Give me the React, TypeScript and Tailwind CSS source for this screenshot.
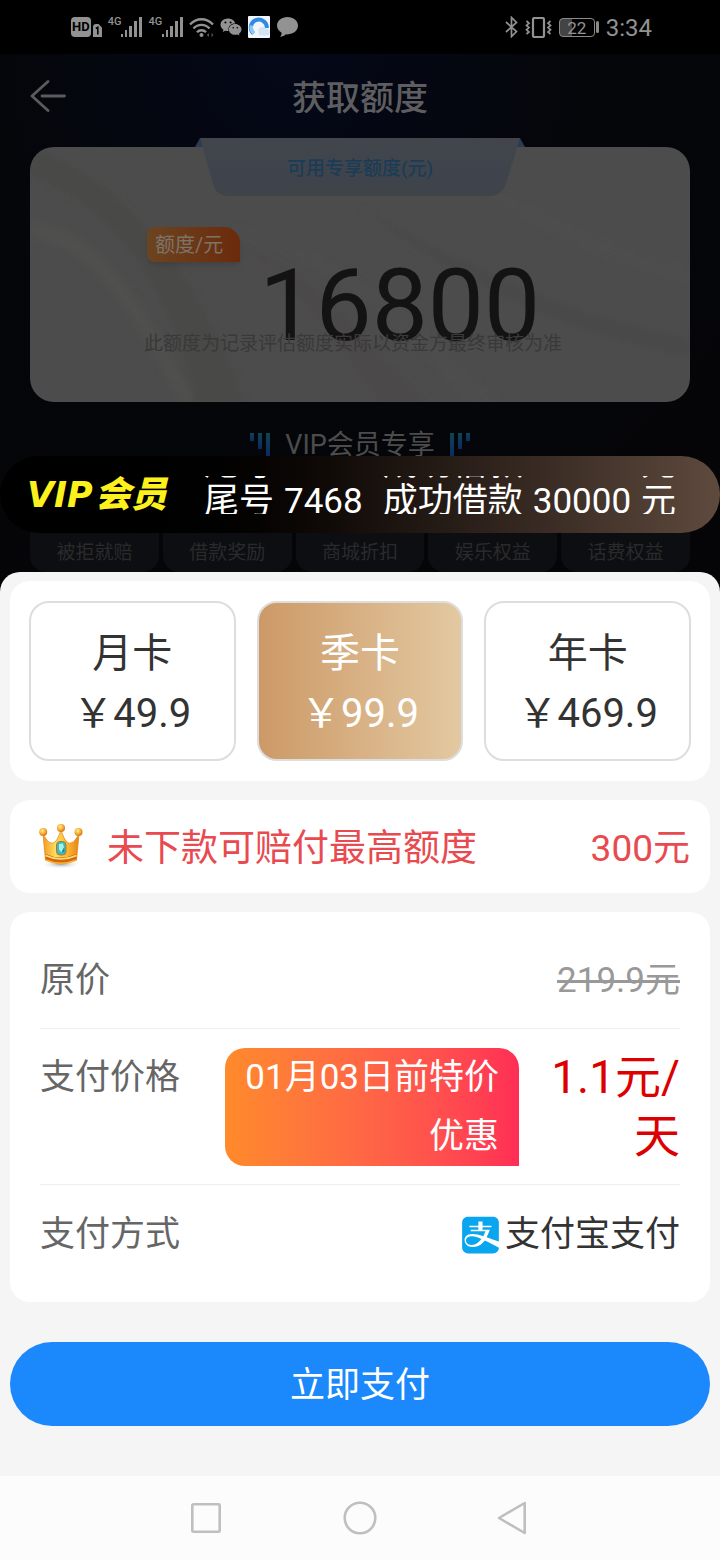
import React, { useState } from "react";
import { FaAlipay, FaWeixin } from "react-icons/fa";

const plans = [
  { id: "month", name: "月卡", price: "49.9" },
  { id: "quarter", name: "季卡", price: "99.9" },
  { id: "year", name: "年卡", price: "469.9" },
];

const benefits = ["被拒就赔", "借款奖励", "商城折扣", "娱乐权益", "话费权益"];

const messages = [
  { tail: "3159", amount: "11000" },
  { tail: "7468", amount: "30000" },
];

function Signal() {
  return (
    <div className="flex items-start">
      <span className="text-[11px] leading-3 font-medium">4G</span>
      <svg width="21" height="22" viewBox="0 0 21 22" fill="currentColor">
        <rect x="0" y="18" width="2" height="3" />
        <rect x="4" y="14" width="2" height="7" />
        <rect x="8" y="10" width="3" height="11" />
        <rect x="13" y="5" width="3" height="16" />
        <rect x="18" y="1" width="3" height="20" />
      </svg>
    </div>
  );
}

function StatusBar() {
  return (
    <div className="h-[54px] bg-black text-[#929292] flex items-center justify-between pl-[71px] pr-[68px]">
      <div className="flex items-center gap-[6px]">
        {/* HD + sim slot */}
        <div className="flex items-end gap-[2px]">
          <span className="h-5 px-px rounded-sm bg-[#929292] text-black text-[13px] leading-5 font-bold">HD</span>
          <svg width="9" height="13" viewBox="0 0 9 13">
            <path d="M0 3Q0 0 3 0H5.500L9 3.500V13H0z" fill="currentColor" />
            <path d="M2.800 4.500l2-1.200V10.500" stroke="#000" strokeWidth="1.600" fill="none" />
          </svg>
        </div>
        <Signal />
        <Signal />
        <svg width="25" height="21" viewBox="0 0 25 21" fill="none" stroke="currentColor" strokeWidth="2.400">
          <path d="M1 7.500C7.500.500 17.500.500 24 7.500" />
          <path d="M4.500 11.500c4.500-4.800 11.500-4.800 16 0" />
          <path d="M8 15.200c2.500-2.700 6.500-2.700 9 0" />
          <circle cx="12.500" cy="18" r="1.200" fill="currentColor" strokeWidth="1.600" />
          <path d="M20 16v4l-2.200-2zM22.500 16v4l2-2z" fill="#555" stroke="none" />
        </svg>
        <FaWeixin className="w-[22px] h-[22px]" />
        <svg width="22" height="22" viewBox="0 0 22 22">
          <rect width="22" height="22" rx="1" fill="#f2f6fb" />
          <path d="M5.500 17.500A8 8 0 1 1 18.800 12" fill="none" stroke="#2d8be6" strokeWidth="4" />
          <path d="M6 17.500a8 8 0 0 1-2.500-8" fill="none" stroke="#8cc7f6" strokeWidth="3.600" />
          <path d="M11 19.500h7.500a3.300 3.300 0 0 0 0-6.600 5 5 0 0 0-8.500 1z" fill="#d3e4f3" />
        </svg>
        <svg width="23" height="22" viewBox="0 0 23 22" fill="currentColor">
          <path d="M11.500 1C5.500 1 1 4.800 1 9.600c0 3 1.800 5.600 4.600 7.100 0 1.600-.6 3-1.600 4 2.400-.1 4.500-1 6-2.400l1.500.1c6 0 10.500-4 10.500-8.800S17.500 1 11.500 1z" />
        </svg>
      </div>

      <div className="flex items-center gap-[7px]">
        <svg width="13" height="22" viewBox="0 0 13 22" fill="none" stroke="currentColor" strokeWidth="1.700">
          <path d="M1 6l10.500 9.500L6.500 20.500V1.500l5 5L1 16" />
        </svg>
        <svg width="27" height="21" viewBox="0 0 27 21" fill="none" stroke="currentColor">
          <rect x="8" y="1" width="11" height="19" rx="1.500" strokeWidth="2.200" />
          <path d="M1.500 4l2.500 2.200-2.500 2.200L4 10.600l-2.500 2.200L4 15l-2.500 2M25.500 4L23 6.200l2.500 2.200-2.500 2.200 2.500 2.200L23 15l2.500 2" strokeWidth="1.700" />
        </svg>
        <div className="flex items-center gap-px">
          <span className="w-9 h-[19px] rounded-[4px] border border-[#8a8a8a] bg-gradient-to-r from-[#444444] from-35% to-black to-35% text-[17px] leading-[18px] text-center">22</span>
          <span className="w-[3px] h-3 rounded-sm bg-[#8a8a8a]" />
        </div>
        <span className="pt-[2px] text-2xl leading-6">3:34</span>
      </div>
    </div>
  );
}

function QuotaCard() {
  return (
    <div className="relative mx-[30px] mt-[9px] h-[255px]">
      <svg className="absolute inset-0 w-full h-full rounded-3xl" viewBox="0 0 660 255" preserveAspectRatio="none">
        <defs>
          <filter id="soft" x="-10%" y="-10%" width="120%" height="120%">
            <feGaussianBlur stdDeviation="3" />
          </filter>
        </defs>
        <rect width="660" height="255" fill="#4c4c4c" />
        <g filter="url(#soft)">
          <path d="M0 30C70 50 140 130 165 255H215C180 150 100 30 0 0z" fill="#4a4947" />
          <path d="M0 75C70 80 110 150 165 255H150C100 160 60 100 0 90z" fill="#4f4f4e" />
          <path d="M190 90C290 120 340 200 400 255H350C300 190 260 120 190 90z" fill="#4b4a48" />
          <path d="M200 80C320 100 420 210 470 255H440C380 190 300 110 200 80z" fill="#4e4e4d" />
          <path d="M330 60C420 110 540 170 660 190V210C530 190 400 120 330 60z" fill="#4a4a4a" />
          <path d="M440 30C520 70 600 110 660 120V135C580 120 500 80 440 30z" fill="#4e4e4e" />
        </g>
      </svg>

      {/* Ribbon */}
      <div className="absolute inset-x-0 -top-[9px] flex justify-center">
        <div className="relative w-[330px] h-[60px]">
          <svg className="absolute inset-0" width="330" height="60" viewBox="0 0 330 60">
            <defs>
              <linearGradient id="ribbon" x1="0" y1="0" x2="0" y2="1">
                <stop offset="0" stopColor="#42464c" />
                <stop offset="0.6" stopColor="#3f444c" />
                <stop offset="1" stopColor="#3f444b" />
              </linearGradient>
            </defs>
            <path d="M0 9L5 0l6 9zM330 9l-5-9-6 9z" fill="#2b3a55" />
            <path d="M5 0H325L311 46q-4 12-16 12H34q-13 0-16-12z" fill="url(#ribbon)" />
          </svg>
          <p className="relative pt-[2px] text-[19px] leading-[58px] text-center font-medium text-[#1b3c56]">可用专享额度(元)</p>
        </div>
      </div>

      <div className="relative pt-[80px] pl-[117px] flex items-start gap-[19px]">
        <span className="h-[35px] pt-px px-2 rounded-l-lg rounded-tr-2xl bg-gradient-to-r from-[#6b4420] to-[#6b2a0b] shadow-md text-[#7d7469] text-[20px] leading-[35px] pr-[17px]">
          额度/元
        </span>
        <span className="mt-[29px] text-[100px] leading-[100px] text-[#131313]">16800</span>
      </div>
      <p className="absolute inset-x-0 bottom-[46px] pr-[14px] text-center text-[19px] leading-6 text-[#393939]">
        此额度为记录评估额度实际以资金方最终审核为准
      </p>
    </div>
  );
}

function TitleBars({ flip = false }: { flip?: boolean }) {
  return (
    <svg className={flip ? "-scale-x-100" : ""} width="20" height="24" viewBox="0 0 20 24">
      <defs>
        <linearGradient id="bars" x1="0" y1="0" x2="0" y2="1" gradientUnits="objectBoundingBox">
          <stop offset="0" stopColor="#104454" />
          <stop offset="1" stopColor="#0b2a63" />
        </linearGradient>
      </defs>
      <rect x="0" y="0" width="4" height="8" fill="url(#bars)" />
      <rect x="8" y="0" width="4" height="16" fill="url(#bars)" />
      <rect x="16" y="0" width="4" height="24" fill="url(#bars)" />
    </svg>
  );
}

function Ticker() {
  return (
    <div className="absolute inset-x-0 bottom-[39px] h-[77px] rounded-full bg-gradient-to-r from-black from-15% to-[#5f4a3e] flex items-center pl-[27px]">
      <div className="w-[177px] flex items-baseline gap-[2px] text-[#fdf11d] italic font-black">
        <span className="font-['DejaVu_Sans'] text-[35px] leading-9">VIP</span>
        <span className="text-[36px] leading-9">会员</span>
      </div>
      <div className="h-[38px] overflow-hidden">
        <ul className="-mt-[31px]">
          {messages.map((msg) => (
            <li key={msg.tail} className="flex gap-[10px] text-[35px] leading-[38px] text-white whitespace-nowrap">
              <span>尾号</span>
              <span className="mr-[10px]">{msg.tail}</span>
              <span>成功借款</span>
              <span>{msg.amount}</span>
              <span>元</span>
            </li>
          ))}
        </ul>
      </div>
    </div>
  );
}

function Crown() {
  return (
    <svg width="44" height="46" viewBox="0 0 44 46">
      <defs>
        <linearGradient id="gold" x1="0" y1="0" x2="1" y2="0">
          <stop offset="0" stopColor="#f29a1f" />
          <stop offset="0.35" stopColor="#ffdc62" />
          <stop offset="0.65" stopColor="#fdbb38" />
          <stop offset="1" stopColor="#e88313" />
        </linearGradient>
        <radialGradient id="ball" cx="0.4" cy="0.35" r="0.7">
          <stop offset="0" stopColor="#fff0a0" />
          <stop offset="0.5" stopColor="#f9b233" />
          <stop offset="1" stopColor="#c96d10" />
        </radialGradient>
        <radialGradient id="shade">
          <stop offset="0" stopColor="#9a9a9a" />
          <stop offset="1" stopColor="#ffffff" stopOpacity="0" />
        </radialGradient>
      </defs>
      <ellipse cx="22" cy="40" rx="20" ry="5" fill="url(#shade)" />
      <path d="M4 10C8 17 11 20 14.500 19C18 17 20 12 22 6C24 12 26 17 29.500 19C33 20 36 17 40 10L37.500 36Q22 43 6.500 36z" fill="url(#gold)" stroke="#e2891b" strokeWidth="0.800" />
      <path d="M6.500 30Q22 37 37.500 30L37.500 36Q22 43 6.500 36z" fill="#d2670f" />
      <path d="M6.500 31.500Q22 38.500 37.500 31.500" fill="none" stroke="#ffdf70" strokeWidth="1.600" />
      <path d="M6.500 36Q22 42.500 37.500 36" fill="none" stroke="#f8b53a" strokeWidth="1.400" />
      <circle cx="22" cy="4" r="4" fill="url(#ball)" />
      <circle cx="4.200" cy="8" r="4" fill="url(#ball)" />
      <circle cx="39.500" cy="8" r="4" fill="url(#ball)" />
      <rect x="17.500" y="17.500" width="9.500" height="13.500" rx="3.500" fill="#35bfc0" stroke="#b9751b" strokeWidth="1" />
      <path d="M20 20l4-.500 1 4-2.500 5-2.500-3z" fill="#a4f1e8" />
      <path d="M22.500 28.500l2.500-5 .500 4z" fill="#16848d" />
    </svg>
  );
}

export default function App() {
  const [selected, setSelected] = useState("quarter");

  return (
    <main className="min-h-screen flex flex-col bg-[#040507] font-['Roboto','Noto_Sans_CJK_SC',sans-serif]">
      {/* Dimmed page behind the sheet */}
      <section className="relative bg-[radial-gradient(circle_at_40%_10%,#040818_0%,#05060a_45%,#050507_100%)]">
        <StatusBar />
        <header className="h-[84px] px-[30px] grid grid-cols-[36px_1fr_36px] items-center">
          <button aria-label="返回" className="text-[#5b5b5d]">
            <svg width="36" height="32" viewBox="0 0 36 32" fill="none" stroke="currentColor" strokeWidth="2.800" strokeLinecap="round" strokeLinejoin="round">
              <path d="M18 1.500L2 16l16 14.500M12 16h22.500" />
            </svg>
          </button>
          <h1 className="pt-1 text-[34px] leading-10 font-medium text-center text-[#5e5e60]">获取额度</h1>
        </header>
        <QuotaCard />

        <div className="mt-[23px] flex items-center justify-center gap-[15px]">
          <TitleBars />
          <h2 className="text-[27px] leading-10 text-[#4c4c4d]">VIP会员专享</h2>
          <TitleBars flip />
        </div>
        <ul className="mx-[30px] mt-[6px] grid grid-cols-5 gap-1">
          {benefits.map((item) => (
            <li key={item} className="h-[101px] pb-[9px] rounded-2xl bg-[#0d0e11] flex items-end justify-center text-[19px] leading-5 text-[#2a2a2b]">
              {item}
            </li>
          ))}
        </ul>
        <Ticker />
      </section>

      {/* Payment sheet */}
      <section className="flex-1 rounded-t-[20px] bg-[#f5f5f5] px-[10px] pt-[9px] pb-[50px] text-[#333333]">
        <div className="rounded-[20px] bg-white px-[19px] py-5 grid grid-cols-3 gap-[21px]">
          {plans.map((plan) => (
            <button
              key={plan.id}
              aria-pressed={selected === plan.id}
              onClick={() => setSelected(plan.id)}
              className={`h-40 pt-[6px] rounded-[20px] border-2 border-[#dddddd] text-[40px] leading-[60px] cursor-pointer ${
                selected === plan.id ? "bg-gradient-to-r from-[#cc9966] to-[#e3c9a2] bg-origin-border text-white" : "bg-white"
              }`}
            >
              <span className="block">{plan.name}</span>
              <span className="block">{"\uFFE5"}{plan.price}</span>
            </button>
          ))}
        </div>

        <div className="mt-[19px] h-[93px] rounded-[20px] bg-white pl-[29px] pr-5 flex items-center text-[37px] text-[#e84a50]">
          <Crown />
          <span className="ml-6 pt-1">未下款可赔付最高额度</span>
          <span className="ml-auto pt-1">300元</span>
        </div>

        <dl className="mt-[19px] rounded-[20px] bg-white px-[30px] py-5 text-[35px] leading-[59px]">
          <div className="pt-[19px] pb-[18px] border-b border-[#eeeeee] flex justify-between">
            <dt className="text-[#666666]">原价</dt>
            <dd className="text-[#999999] line-through">219.9元</dd>
          </div>
          <div className="pt-[19px] pb-[18px] border-b border-[#eeeeee] flex">
            <dt className="text-[#666666]">支付价格</dt>
            <dd className="ml-auto flex gap-[30px] text-right">
              <span className="w-[294px] pl-4 pr-5 rounded-[20px] rounded-br-none bg-gradient-to-r from-[#ff8a2a] to-[#ff2d55] text-white">
                01月03日前特价优惠
              </span>
              <span className="w-[131px] text-[46px] text-[#dd0000]">1.1元/天</span>
            </dd>
          </div>
          <div className="pt-5 pb-[18px] flex justify-between">
            <dt className="text-[#666666]">支付方式</dt>
            <dd className="flex items-center gap-[6px]">
              <FaAlipay className="w-[37px] h-[42px] text-[#09a5ee]" />
              支付宝支付
            </dd>
          </div>
        </dl>

        <button className="mt-10 pt-1 w-full h-[84px] rounded-full bg-[#1b88fb] text-white text-[35px] cursor-pointer">
          立即支付
        </button>
      </section>

      {/* System navigation */}
      <nav className="h-[84px] bg-[#fcfcfc] text-[#bfbfbf] flex items-center justify-center gap-[119px]">
        <button aria-label="最近任务">
          <svg width="34" height="34" viewBox="0 0 34 34" fill="none" stroke="currentColor" strokeWidth="2.600">
            <rect x="2.300" y="3.300" width="27.400" height="27.400" rx="1" />
          </svg>
        </button>
        <button aria-label="主页">
          <svg width="34" height="34" viewBox="0 0 34 34" fill="none" stroke="currentColor" strokeWidth="2.600">
            <circle cx="17" cy="17" r="15.300" />
          </svg>
        </button>
        <button aria-label="后退">
          <svg width="34" height="34" viewBox="0 0 34 34" fill="none" stroke="currentColor" strokeWidth="2.600" strokeLinejoin="round">
            <path d="M28.700 2v30L3 17z" />
          </svg>
        </button>
      </nav>
    </main>
  );
}
